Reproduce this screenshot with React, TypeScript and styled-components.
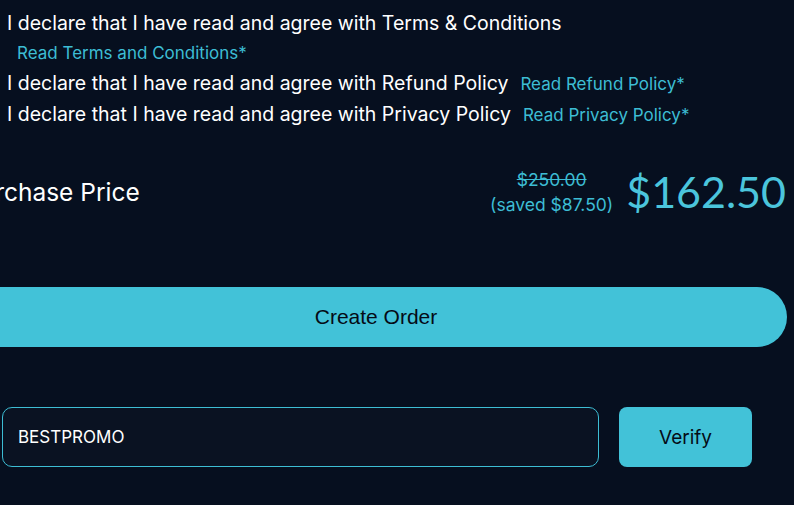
import React, { useState } from 'react';
import styled, { createGlobalStyle } from 'styled-components';

const GlobalStyle = createGlobalStyle`
  body {
    margin: 0;
    background: #060f1f;
    overflow: hidden;
    font-family: Inter, 'Noto Sans', sans-serif;
  }
`;

const Page = styled.div`
  width: 822px;
  margin-left: -35px;
  padding-top: 8px;
`;

const Agreements = styled.div`
  display: flex;
  flex-direction: column;
  padding-left: 42px;
`;

const AgreeRow = styled.div<{ $stacked?: boolean }>`
  display: flex;
  flex-direction: ${(p) => (p.$stacked ? 'column' : 'row')};
  align-items: ${(p) => (p.$stacked ? 'flex-start' : 'baseline')};
  gap: ${(p) => (p.$stacked ? '0' : '12px')};
  line-height: 30px;
`;

const AgreeText = styled.span`
  color: #ffffff;
  font-size: 19.5px;
`;

const ReadLink = styled.a<{ $indent?: boolean }>`
  color: #3dbdd4;
  font-size: 17px;
  text-decoration: none;
  margin-left: ${(p) => (p.$indent ? '10px' : '0')};
  cursor: pointer;
`;

const PriceRow = styled.div`
  display: flex;
  justify-content: space-between;
  align-items: center;
  margin-top: 36px;
  padding-right: 1px;
`;

const PriceLabel = styled.div`
  color: #ffffff;
  font-size: 24.5px;
`;

const PriceBox = styled.div`
  display: flex;
  align-items: center;
  gap: 13px;
`;

const OldPrice = styled.div`
  display: flex;
  flex-direction: column;
  align-items: center;
  color: #3dbdd4;
  font-size: 17.5px;
  line-height: 25px;
`;

const Struck = styled.span`
  text-decoration: line-through;
`;

const NewPrice = styled.div`
  color: #4bc5dc;
  font-family: Lato, Inter, sans-serif;
  font-size: 43px;
  line-height: 52px;
`;

const OrderButton = styled.button`
  display: block;
  width: 822px;
  height: 60px;
  margin-top: 69px;
  border: none;
  border-radius: 30px;
  background: #42c2d8;
  color: #050b16;
  font-family: 'Liberation Sans', Arial, sans-serif;
  font-size: 21px;
  cursor: pointer;
`;

const PromoRow = styled.div`
  display: flex;
  gap: 20px;
  align-items: center;
  margin-top: 60px;
  padding-left: 37px;
`;

const PromoInput = styled.input`
  width: 597px;
  height: 60px;
  box-sizing: border-box;
  padding: 0 15px;
  background: #0a1222;
  border: 1px solid #3dbdd4;
  border-radius: 10px;
  color: #ffffff;
  font-family: Inter, 'Noto Sans', sans-serif;
  font-size: 17px;
  outline: none;
`;

const VerifyButton = styled.button`
  width: 133px;
  height: 60px;
  border: none;
  border-radius: 8px;
  background: #42c2d8;
  color: #050b16;
  font-family: Inter, 'Noto Sans', sans-serif;
  font-size: 19px;
  cursor: pointer;
`;

const policies = [
  { text: 'Terms & Conditions', link: 'Read Terms and Conditions*', stacked: true },
  { text: 'Refund Policy', link: 'Read Refund Policy*' },
  { text: 'Privacy Policy', link: 'Read Privacy Policy*' },
];

export default function App() {
  const [code, setCode] = useState('BESTPROMO');

  return (
    <>
      <GlobalStyle />
      <Page>
        <Agreements>
          {policies.map((p) => (
            <AgreeRow key={p.text} $stacked={p.stacked}>
              <AgreeText>I declare that I have read and agree with {p.text}</AgreeText>
              <ReadLink $indent={p.stacked}>{p.link}</ReadLink>
            </AgreeRow>
          ))}
        </Agreements>

        <PriceRow>
          <PriceLabel>Purchase Price</PriceLabel>
          <PriceBox>
            <OldPrice>
              <Struck>$250.00</Struck>
              <span>(saved $87.50)</span>
            </OldPrice>
            <NewPrice>$162.50</NewPrice>
          </PriceBox>
        </PriceRow>

        <OrderButton>Create Order</OrderButton>

        <PromoRow>
          <PromoInput value={code} onChange={(e) => setCode(e.target.value)} />
          <VerifyButton>Verify</VerifyButton>
        </PromoRow>
      </Page>
    </>
  );
}
